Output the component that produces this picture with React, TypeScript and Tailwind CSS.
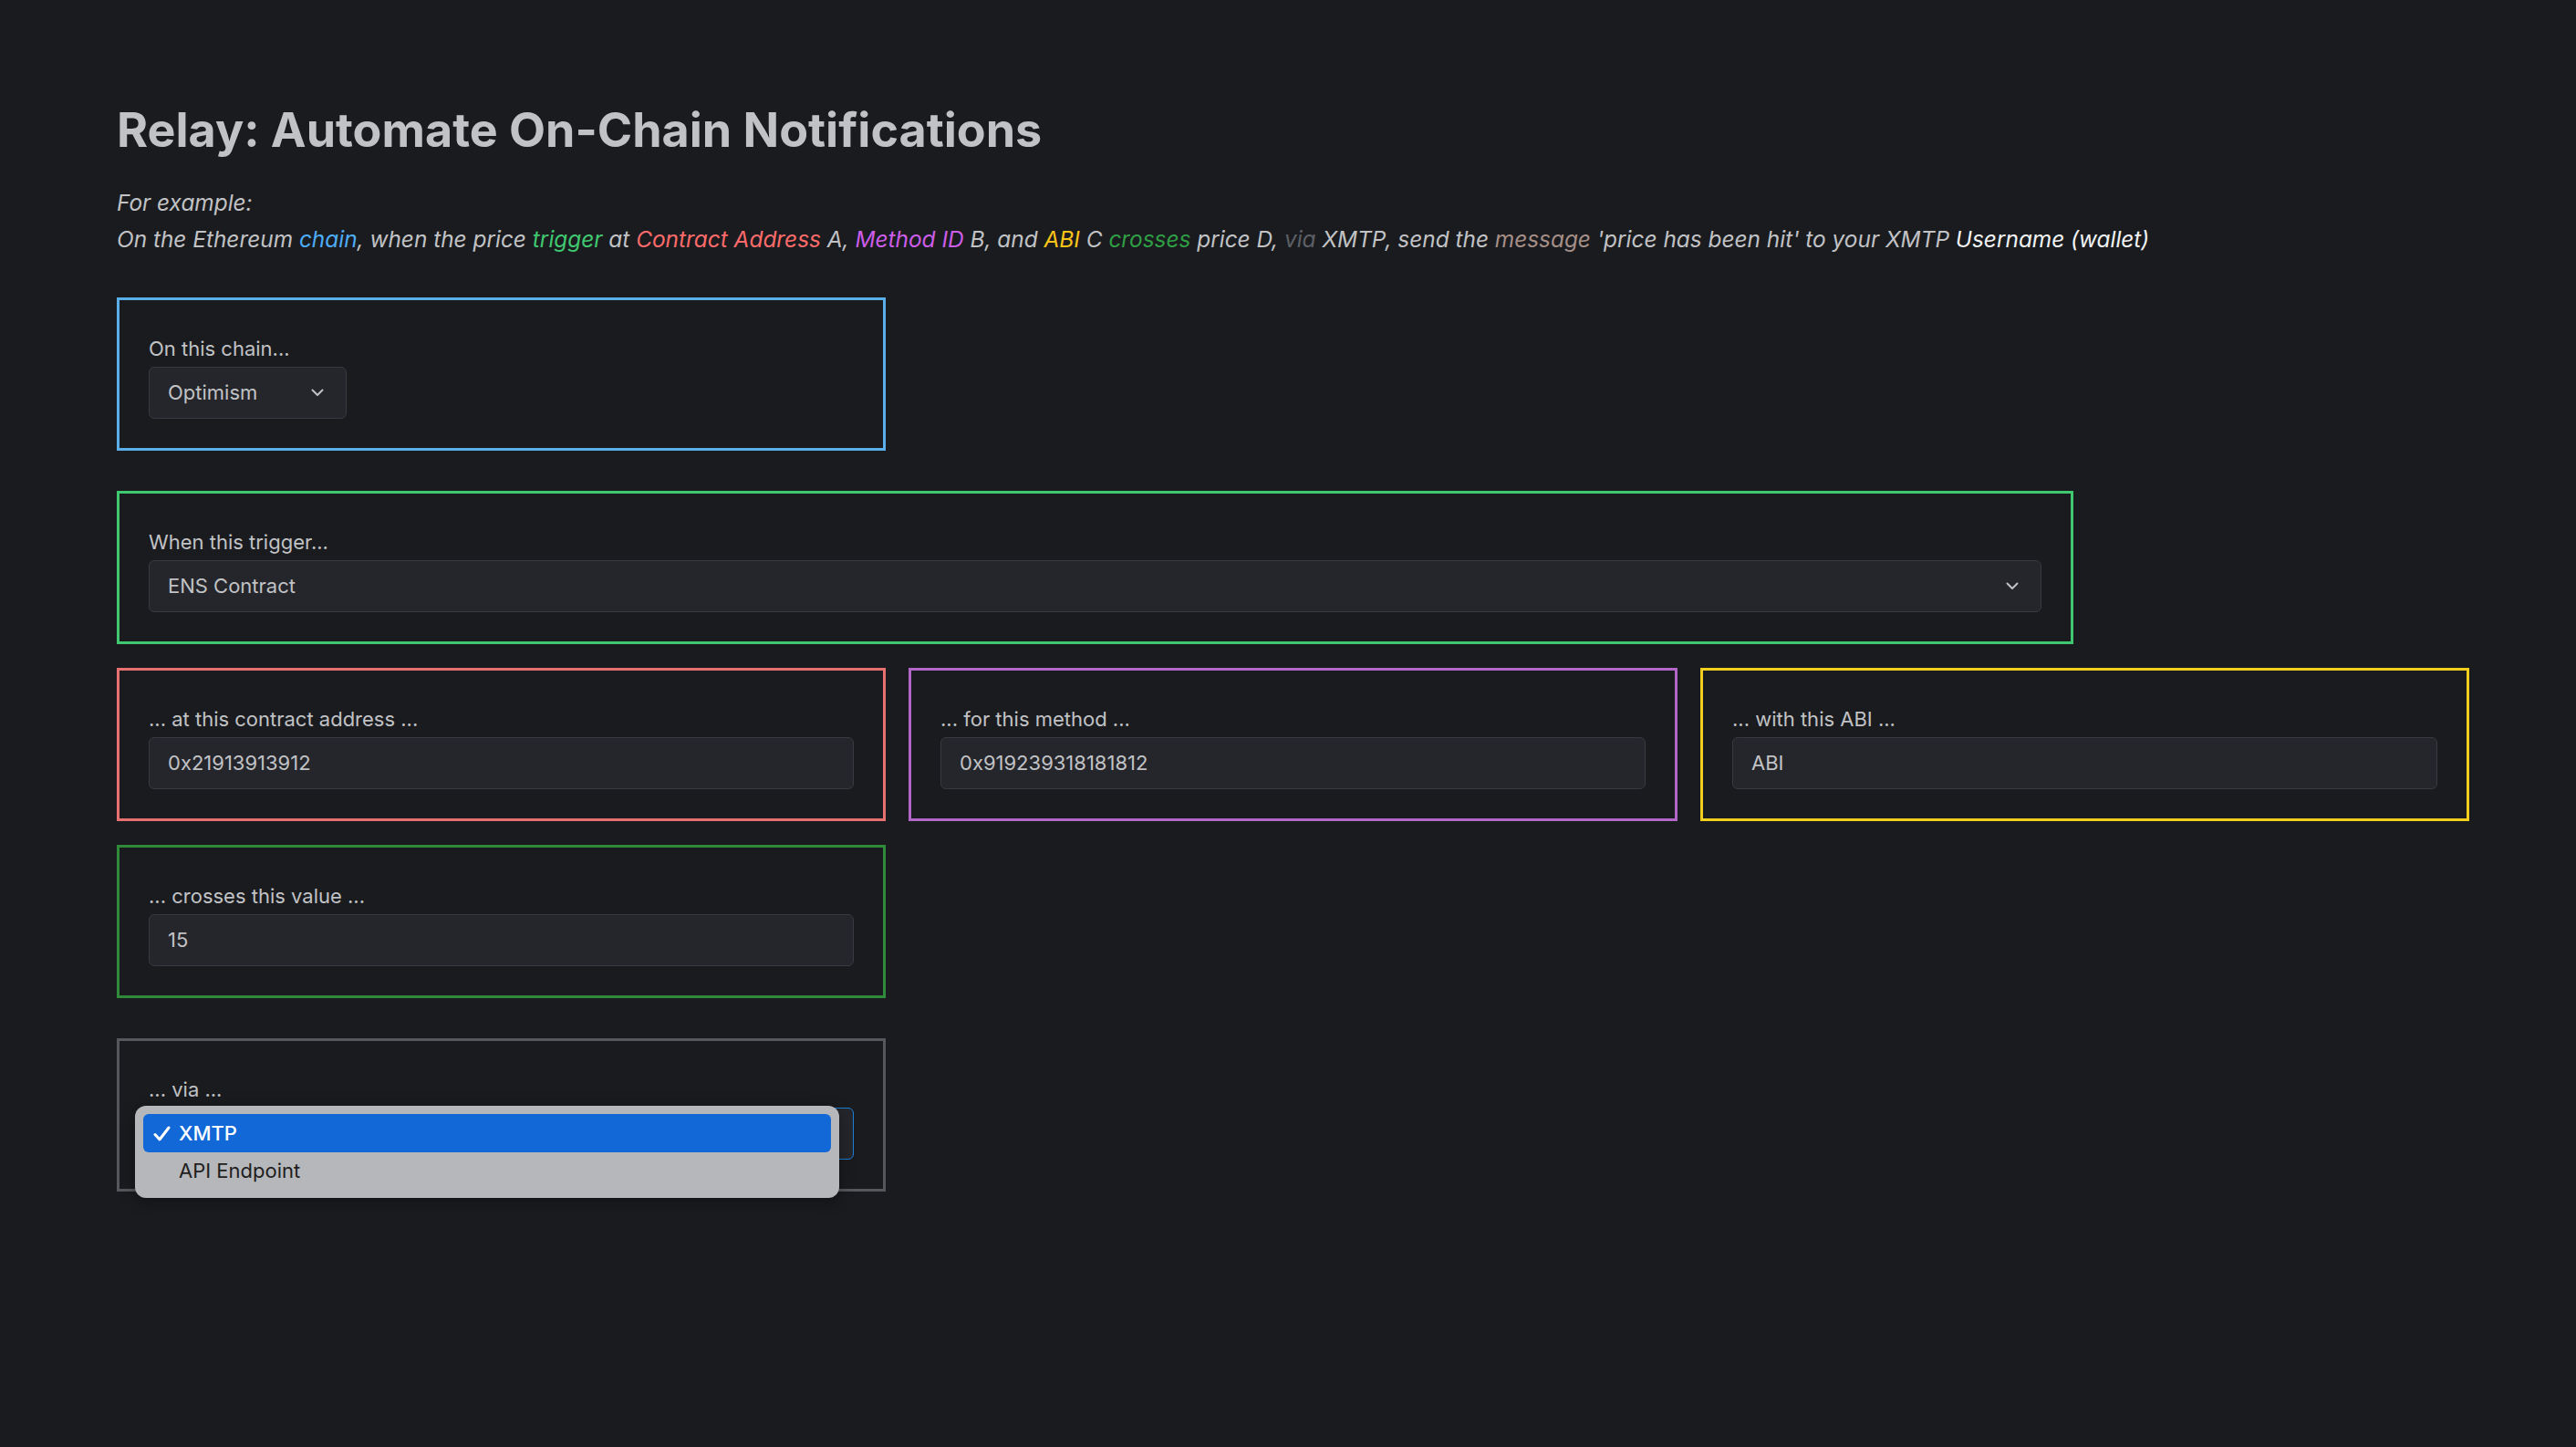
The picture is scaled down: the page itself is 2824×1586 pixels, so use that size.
import React from 'react'

const font = { fontFamily: 'Inter, "Noto Sans", sans-serif' }

type BoxProps = {
  label: string
  border: string
  span: string
  children: React.ReactNode
}

const Box = ({ label, border, span, children }: BoxProps) => (
  <div className={`${span} relative border-[3px] ${border} px-[32px] pt-[36px] pb-[32px]`}>
    <div className="text-[22px] leading-[34px] text-[#C1C2C5] mb-[3px]">{label}</div>
    {children}
  </div>
)

const Chevron = () => (
  <svg width="14" height="9" viewBox="0 0 14 9" fill="none">
    <path d="M1.5 1.5l5.5 5.5 5.5-5.5" stroke="#C1C2C5" strokeWidth="2" strokeLinecap="round" strokeLinejoin="round" />
  </svg>
)

const Field = ({ value, className = 'w-full', select = false }: { value: string; className?: string; select?: boolean }) => (
  <div className={`${className} flex h-[57px] items-center justify-between rounded-[6px] border border-[#373A40] bg-[#25262B] pl-[20px] pr-[24px] text-[22px] text-[#C1C2C5]`}>
    <span>{value}</span>
    {select && <Chevron />}
  </div>
)

export default function App() {
  return (
    <div className="min-h-[1586px] w-full bg-[#1A1B1E]" style={font}>
      <div className="w-[2579px] pl-[128px] pt-[109px] box-content">
        <h1 className="text-[52px] font-bold leading-[68px] text-[#C1C2C5]">Relay: Automate On-Chain Notifications</h1>
        <div className="mt-[25px] text-[24.4px] leading-[40px] italic text-[#C1C2C5]">
          <p>For example:</p>
          <p>
            On the Ethereum <span className="text-[#4DABF7]">chain</span>, when the price{' '}
            <span className="text-[#40C870]">trigger</span> at{' '}
            <span className="text-[#FF6B6B]">Contract Address</span> A,{' '}
            <span className="text-[#CC5DE8]">Method ID</span> B, and{' '}
            <span className="text-[#FCC419]">ABI</span> C{' '}
            <span className="text-[#2F9E44]">crosses</span> price D,{' '}
            <span className="text-[#5C5F66]">via</span> XMTP, send the{' '}
            <span className="text-[#A58E87]">message</span> 'price has been hit' to your XMTP{' '}
            <span className="text-[#F1F3F5]">Username (wallet)</span>
          </p>
        </div>

        <div className="mt-[44px] grid grid-cols-12 gap-[25px]">
          <Box label="On this chain..." border="border-[#5AAEEA]" span="col-span-4">
            <Field value="Optimism" className="w-[217px]" select />
          </Box>
        </div>

        <div className="mt-[44px] grid grid-cols-12 gap-x-[25px] gap-y-[26px]">
          <Box label="When this trigger..." border="border-[#40C870]" span="col-span-10">
            <Field value="ENS Contract" select />
          </Box>
          <div className="col-span-2" />
          <Box label="... at this contract address ..." border="border-[#E87070]" span="col-span-4">
            <Field value="0x21913913912" />
          </Box>
          <Box label="... for this method ..." border="border-[#B266C8]" span="col-span-4">
            <Field value="0x919239318181812" />
          </Box>
          <Box label="... with this ABI ..." border="border-[#F2CF1C]" span="col-span-4">
            <Field value="ABI" />
          </Box>
          <Box label="... crosses this value ..." border="border-[#2F8A3A]" span="col-span-4">
            <Field value="15" />
          </Box>
        </div>

        <div className="mt-[44px] grid grid-cols-12 gap-[25px]">
          <Box label="... via ..." border="border-[#55575C]" span="col-span-4">
            <div className="h-[57px] w-full rounded-[6px] border border-[#1C7ED6] bg-[#25262B]" />
            <div className="absolute left-[17px] top-[71px] z-10 w-[772px] rounded-[12px] bg-[#B6B7BA] p-[9px] shadow-[0_4px_16px_rgba(0,0,0,0.35)]">
              <div className="flex h-[42px] items-center rounded-[6px] bg-[#1268D6] text-[22px] font-medium text-white">
                <span className="flex w-[39px] justify-center pl-[2px]">
                  <svg width="19" height="17" viewBox="0 0 19 17" fill="none">
                    <path d="M2 9.5l5 5.5L17 2" stroke="white" strokeWidth="3" strokeLinecap="round" strokeLinejoin="round" />
                  </svg>
                </span>
                <span>XMTP</span>
              </div>
              <div className="flex h-[41px] items-center pl-[39px] text-[22px] text-[#1E1E1E]">API Endpoint</div>
            </div>
          </Box>
        </div>
      </div>
    </div>
  )
}
